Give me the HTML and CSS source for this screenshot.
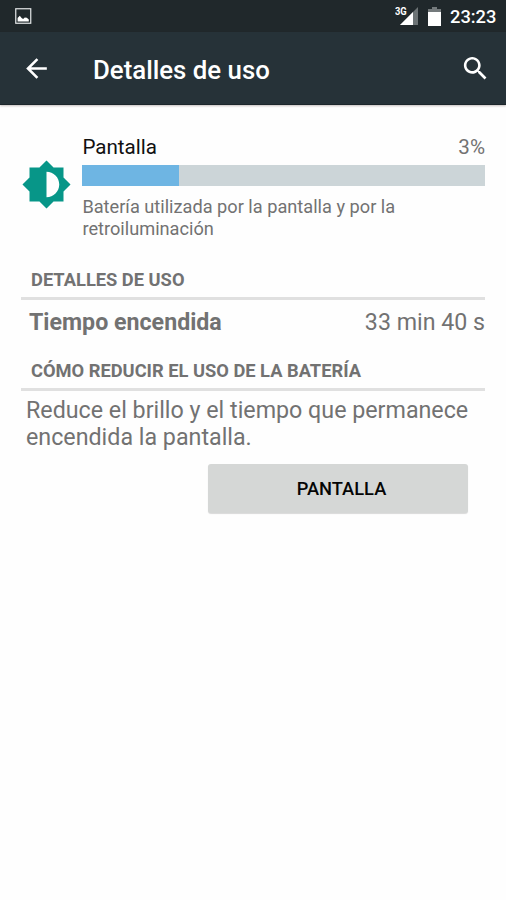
FILE: index.html
```html
<!DOCTYPE html>
<html lang="es">
<head>
<meta charset="utf-8">
<title>Detalles de uso</title>
<link rel="stylesheet" href="styles.css">
</head>
<body>
<div class="status">
  <svg class="status-image" viewBox="0 0 17 17"><rect x=".75" y=".75" width="15" height="14.5" fill="none" stroke="#e4e7e8" stroke-width="1.2"/><path d="M2.6 13.4V10l2.2-2.2L6.6 10l1.5 1 1.7-1.5 2 .2 2 1.8v1.9z" fill="#fff"/></svg>
  <span class="network">3G</span>
  <svg class="signal" viewBox="0 0 19 18"><path d="M18 0v18H0z" fill="#6c7375"/><path d="M13 5v13H0z" fill="#fff"/></svg>
  <svg class="battery" viewBox="0 0 13 19"><path d="M4 0h5v2h4v4H0V2h4z" fill="#747a7c"/><path d="M0 5h13v14H0z" fill="#fff"/></svg>
  <span class="clock">23:23</span>
</div>
<header class="appbar">
  <svg class="back" viewBox="0 0 24 24"><path d="M20 11H7.83l5.59-5.59L12 4l-8 8 8 8 1.41-1.41L7.83 13H20v-2z"/></svg>
  <h1 class="title">Detalles de uso</h1>
  <svg class="search" viewBox="0 0 24 24"><path d="M15.5 14h-.79l-.28-.27C15.41 12.59 16 11.11 16 9.5 16 5.91 13.09 3 9.5 3S3 5.91 3 9.5 5.91 16 9.5 16c1.61 0 3.09-.59 4.23-1.57l.27.28v.79l5 4.99L20.49 19l-4.99-5zm-6 0C7.01 14 5 11.99 5 9.5S7.01 5 9.5 5 14 7.01 14 9.5 11.99 14 9.5 14z"/></svg>
</header>
<main class="content">
  <section class="summary">
    <svg class="brightness" viewBox="0 0 24 24"><path d="M20 15.31L23.31 12 20 8.69V4h-4.69L12 .69 8.69 4H4v4.69L.69 12 4 15.31V20h4.69L12 23.31 15.31 20H20v-4.69zM12 18V6c3.31 0 6 2.69 6 6s-2.69 6-6 6z"/></svg>
    <div class="usage">
      <div class="usage-head"><span class="name">Pantalla</span><span class="percent">3%</span></div>
      <div class="bar"><div class="bar-fill"></div></div>
      <p class="description">Batería utilizada por la pantalla y por la retroiluminación</p>
    </div>
  </section>
  <h2 class="heading">DETALLES DE USO</h2>
  <div class="detail"><span class="detail-name">Tiempo encendida</span><span class="detail-value">33 min 40 s</span></div>
  <h2 class="heading">CÓMO REDUCIR EL USO DE LA BATERÍA</h2>
  <p class="tip">Reduce el brillo y el tiempo que permanece encendida la pantalla.</p>
  <button class="action">PANTALLA</button>
</main>
</body>
</html>
```
FILE: styles.css
```css
* { box-sizing: border-box; }
body { margin: 0; min-height: 900px; background: #fefefe; color: #727272; font-family: Roboto, sans-serif; }
svg { display: block; flex: none; }
h1, h2, p { margin: 0; }
.status { display: flex; height: 32px; padding: 0 10px 0 15px; background: #20282b; color: #fff; }
.status-image { width: 17px; height: 17px; margin-top: 8px; }
.network { margin: 5px 0 0 auto; width: 5px; font-size: 11px; font-weight: 700; line-height: 13px; transform: scaleX(.85); transform-origin: left; white-space: nowrap; }
.signal { width: 19px; height: 18px; margin-top: 7px; }
.battery { width: 13px; height: 19px; margin: 7px 0 0 9px; }
.clock { margin-left: 9px; width: 46px; font-size: 18.3px; font-weight: 500; line-height: 34px; white-space: nowrap; }
.appbar { display: flex; height: 73px; padding-left: 21px; background: #263238; border-bottom: 1px solid #1c262b; box-shadow: 0 1px 2px rgba(60,40,35,.3); color: #fff; }
.back { width: 31px; height: 31px; margin-top: 21px; fill: #fff; }
.title { margin-left: 41px; font-size: 25.8px; font-weight: 500; line-height: 76px; white-space: nowrap; }
.search { width: 31px; height: 31px; margin: 21px 15.5px 0 auto; fill: #fff; }
.content { padding: 31px 21px 0; }
.summary { display: flex; height: 127px; }
.brightness { width: 51px; height: 51px; margin: 23px 10.4px 0 0; fill: #079688; }
.usage { flex: 1; }
.usage-head { display: flex; justify-content: space-between; height: 29px; font-size: 20.6px; line-height: 23px; }
.name { color: #111; }
.bar { height: 21px; background: #ccd5d8; }
.bar-fill { width: 97px; height: 21px; background: #6eb5e3; }
.description { margin-top: 10px; font-size: 18.2px; line-height: 21.5px; }
.heading { height: 37px; padding-left: 10px; border-bottom: 3px solid #e0e0e0; font-size: 18.3px; font-weight: 700; line-height: 33px; white-space: nowrap; }
.detail { display: flex; justify-content: space-between; height: 54px; padding-left: 8px; font-size: 23.2px; line-height: 44px; }
.detail-name { font-weight: 700; }
.tip { margin: 6px 0 0 5px; font-size: 23.25px; line-height: 27px; }
.action { display: block; width: 260px; height: 49px; margin: 13px 17px 0 auto; padding: 0 0 0 7px; border: 0; border-radius: 3px; background: #d5d7d6; box-shadow: 0 1px 1px rgba(0,0,0,.15); color: #050505; font: 500 18.3px/49px Roboto, sans-serif; }
```
